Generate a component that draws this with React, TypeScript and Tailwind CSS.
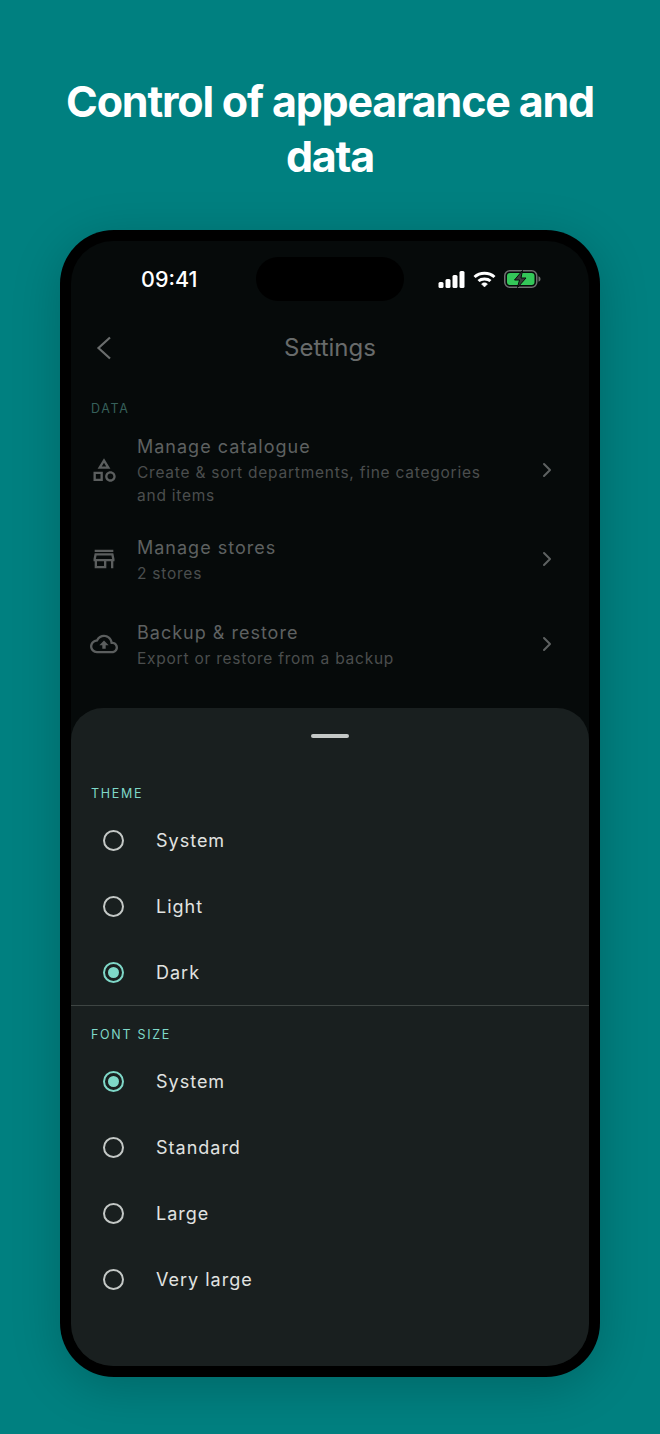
import { ChevronRight } from 'lucide-react';

const dataRows = [
  {
    title: 'Manage catalogue',
    sub: ['Create & sort departments, fine categories', 'and items'],
    path: 'M12 2l-5.5 9h11L12 2zm0 3.84L13.93 9h-3.87L12 5.84zM17.5 13c-2.49 0-4.5 2.01-4.5 4.5s2.01 4.5 4.5 4.5 4.5-2.01 4.5-4.5-2.01-4.5-4.5-4.5zm0 7c-1.38 0-2.5-1.12-2.5-2.5s1.12-2.5 2.5-2.5 2.5 1.12 2.5 2.5-1.12 2.5-2.5 2.5zM3 21.5h8v-8H3v8zm2-6h4v4H5v-4z',
  },
  {
    title: 'Manage stores',
    sub: ['2 stores'],
    path: 'M18.36 9l.6 3H5.04l.6-3h12.72M20 4H4v2h16V4zm0 3H4l-1 5v2h1v6h10v-6h4v6h2v-6h1v-2l-1-5zM6 18v-4h6v4H6z',
  },
  {
    title: 'Backup & restore',
    sub: ['Export or restore from a backup'],
    path: 'M19.35 10.04C18.67 6.59 15.64 4 12 4 9.11 4 6.6 5.64 5.35 8.04 2.34 8.36 0 10.91 0 14c0 3.31 2.69 6 6 6h13c2.76 0 5-2.24 5-5 0-2.64-2.05-4.78-4.65-4.96zM19 18H6c-2.21 0-4-1.79-4-4 0-2.05 1.53-3.76 3.56-3.97l1.07-.11.5-.95C8.08 7.14 9.94 6 12 6c2.62 0 4.88 1.86 5.39 4.43l.3 1.5 1.53.11c1.56.1 2.78 1.41 2.78 2.96 0 1.65-1.35 3-3 3zM8 13h2.55v3h2.9v-3H16l-4-4z',
  },
];

function StatusIcons() {
  return (
    <div className="flex items-center gap-[8px]">
      <svg width="27" height="17" viewBox="0 0 27 17" fill="#fff">
        <rect x="0.5" y="11" width="5" height="6" rx="1.5" />
        <rect x="7.5" y="8" width="5" height="9" rx="1.5" />
        <rect x="14.5" y="4" width="5" height="13" rx="1.5" />
        <rect x="21.5" y="0" width="5" height="17" rx="1.5" />
      </svg>
      <svg width="23" height="17" viewBox="0 0 23 17" fill="none" stroke="#fff" strokeWidth="3">
        <path d="M1.5 6 C7 1 16 1 21.5 6" />
        <path d="M5.5 10 C8.5 7.3 14.5 7.3 17.5 10" />
        <path d="M8.5 13 L11.5 16 L14.5 13 C13 11.4 10 11.4 8.5 13 Z" fill="#fff" strokeWidth="0.5" />
      </svg>
      <svg width="37" height="18" viewBox="0 0 37 18">
        <rect x="0.75" y="0.75" width="32" height="16.5" rx="5" fill="none" stroke="#6e7070" strokeWidth="1.5" />
        <rect x="3" y="3" width="27.5" height="12" rx="3" fill="#34c759" />
        <path d="M34.5 6.2c1.4.5 2 1.5 2 2.8s-.6 2.3-2 2.8z" fill="#6e7070" />
        <path d="M18.5 0.5 L10.5 10 H15.5 L13.5 17.5 L22 8 H17 Z" fill="#3a3d3c" stroke="#060a0a" strokeWidth="1" />
      </svg>
    </div>
  );
}

function Radio({ label, selected }: { label: string; selected?: boolean }) {
  return (
    <div className="flex h-[66px] items-center pl-[32px]">
      {selected ? (
        <div className="flex h-[21px] w-[21px] items-center justify-center rounded-full border-2 border-[#7fd8c8]">
          <div className="h-[11px] w-[11px] rounded-full bg-[#7fd8c8]" />
        </div>
      ) : (
        <div className="h-[21px] w-[21px] rounded-full border-2 border-[#c4c8c6]" />
      )}
      <span className="ml-[32px] text-[18px] tracking-[1px] text-[#e1e3e1]">{label}</span>
    </div>
  );
}

export default function App() {
  return (
    <div className="h-[1434px] w-[660px] overflow-hidden bg-[#008080] font-['Inter',sans-serif]">
      <h1 className="px-[40px] pt-[74px] text-center text-[43px] leading-[55px] font-bold tracking-[-1.2px] text-white">
        Control of appearance and data
      </h1>

      <div className="mx-[60px] mt-[46px] h-[1147px] rounded-[54px] bg-black p-[11px] shadow-[0_10px_50px_rgba(0,0,0,0.2)]">
        <div className="relative flex h-full flex-col overflow-hidden rounded-[42px] bg-[#060a0a]">
          {/* Dynamic island */}
          <div className="absolute top-[16px] left-[185px] h-[44px] w-[148px] rounded-full bg-black" />

          <div className="flex h-[76px] items-center justify-between pr-[48px] pl-[70px]">
            <span className="pt-[1px] text-[21.5px] font-medium text-white">09:41</span>
            <StatusIcons />
          </div>

          <div className="relative flex h-[60px] items-center justify-center pt-[1px]">
            <svg width="16" height="24" viewBox="0 0 16 24" fill="none" className="absolute left-[25px]">
              <path d="M14 1.5 L2.5 12 L14 22.5" stroke="#6a6d6d" strokeWidth="2.2" />
            </svg>
            <span className="text-[24px] text-[#686b6b]">Settings</span>
          </div>

          <div className="pt-[24px] pl-[20px] text-[12.5px] leading-[16px] tracking-[1.7px] text-[#36605a]">DATA</div>

          <div className="pt-[6px]">
            {dataRows.map((row, i) => (
              <div
                key={row.title}
                className={
                  i === 0
                    ? 'flex h-[93px] items-center pr-[30px] pl-[19px]'
                    : 'flex h-[85px] items-center pr-[30px] pl-[19px]'
                }
              >
                <svg width="28" height="28" viewBox="0 0 24 24" fill="#5b5e5e" className="shrink-0">
                  <path d={row.path} />
                </svg>
                <div className="ml-[19px] flex-1 tracking-[0.76px]">
                  <div className="text-[18px] leading-[29px] tracking-[1px] text-[#5e6161]">{row.title}</div>
                  {row.sub.map((line) => (
                    <div key={line} className="text-[15.5px] leading-[23px] text-[#4b4e4e]">
                      {line}
                    </div>
                  ))}
                </div>
                <ChevronRight className="h-[24px] w-[24px] text-[#5e6161]" strokeWidth={2} />
              </div>
            ))}
          </div>

          <div className="absolute inset-x-0 top-[467px] bottom-0 rounded-t-[32px] bg-[#191f1f]">
            <div className="flex justify-center pt-[26px]">
              <div className="h-[4px] w-[38px] rounded-full bg-[#c4c8c6]" />
            </div>
            <div className="pt-[48px] pl-[20px] text-[12.5px] leading-[16px] tracking-[1.7px] text-[#7fd8c8]">THEME</div>
            <div className="pt-[5px]">
              <Radio label="System" />
              <Radio label="Light" />
              <Radio label="Dark" selected />
            </div>
            <div className="h-px bg-[#3e4543]" />
            <div className="pt-[21px] pl-[20px] text-[12.5px] leading-[16px] tracking-[1.7px] text-[#7fd8c8]">FONT SIZE</div>
            <div className="pt-[5px]">
              <Radio label="System" selected />
              <Radio label="Standard" />
              <Radio label="Large" />
              <Radio label="Very large" />
            </div>
          </div>
        </div>
      </div>
    </div>
  );
}
